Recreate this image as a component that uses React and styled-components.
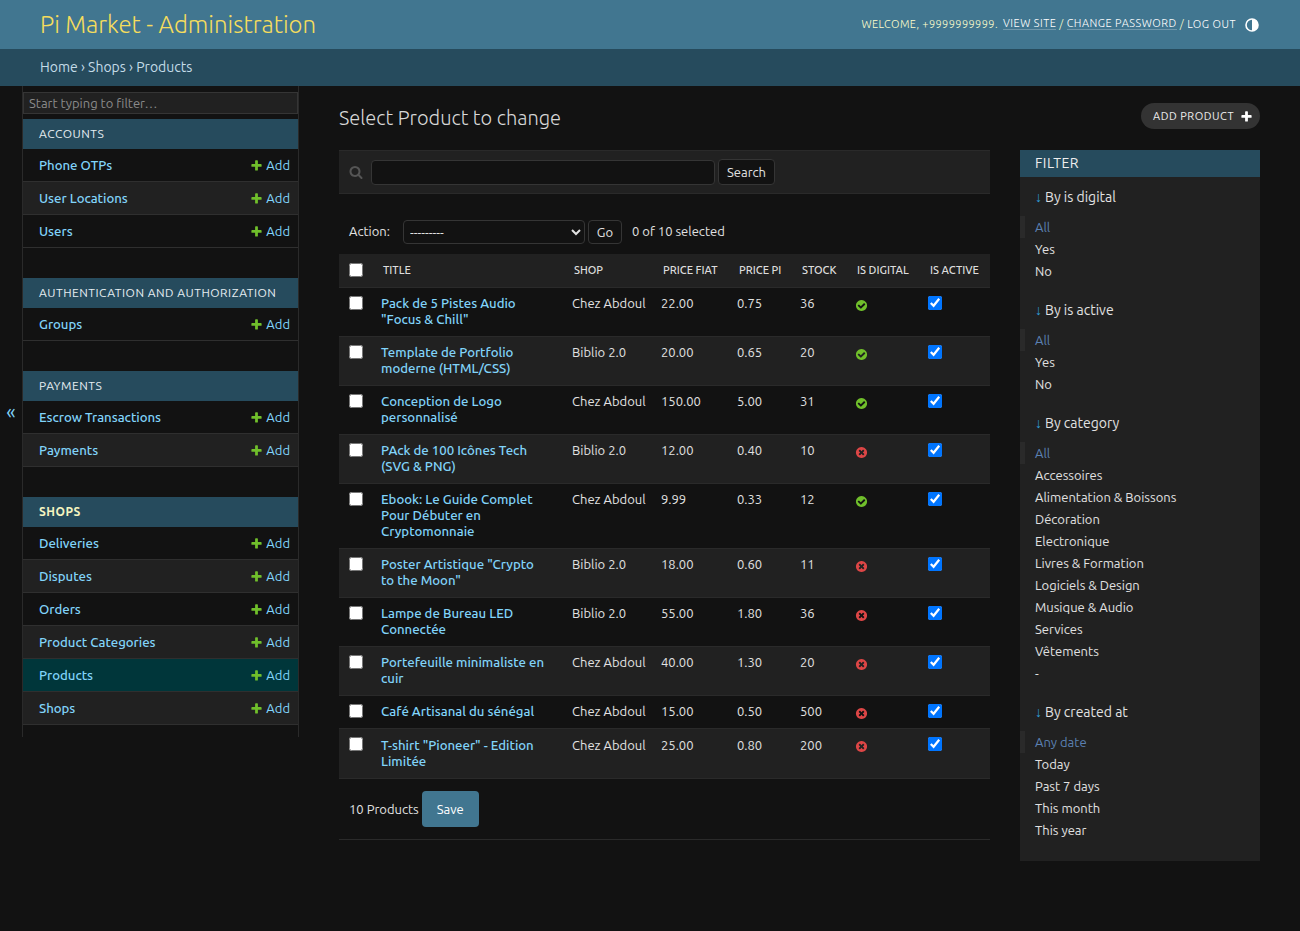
import React from "react";
import styled, { createGlobalStyle } from "styled-components";

const GlobalStyle = createGlobalStyle`
  html, body {
    margin: 0;
    padding: 0;
    background: #121212;
  }
  body {
    font-family: Ubuntu, "Noto Sans", "Open Sans", sans-serif;
    font-size: 14px;
    color: #e2e2e2;
  }
  * {
    box-sizing: border-box;
  }
`;

const PLUS =
  "M1600 796v192q0 40-28 68t-68 28h-416v416q0 40-28 68t-68 28h-192q-40 0-68-28t-28-68v-416h-416q-40 0-68-28t-28-68v-192q0-40 28-68t68-28h416v-416q0-40 28-68t68-28h192q40 0 68 28t28 68v416h416q40 0 68 28t28 68z";
const YES =
  "M1412 734q0-28-18-46l-91-90q-19-19-45-19t-45 19l-408 407-226-226q-19-19-45-19t-45 19l-91 90q-18 18-18 46 0 27 18 45l362 362q19 19 45 19 27 0 46-19l543-543q18-18 18-45zm252 162q0 209-103 385.5t-279.5 279.5-385.5 103-385.5-103-279.5-279.5-103-385.5 103-385.5 279.5-279.5 385.5-103 385.5 103 279.5 279.5 103 385.5z";
const NO =
  "M1277 1122q0-26-19-45l-181-181 181-181q19-19 19-45 0-27-19-46l-90-90q-19-19-46-19-26 0-45 19l-181 181-181-181q-19-19-45-19-27 0-46 19l-90 90q-19 19-19 46 0 26 19 45l181 181-181 181q-19 19-19 45 0 27 19 46l90 90q19 19 46 19 26 0 45-19l181-181 181 181q19 19 45 19 27 0 46-19l90-90q19-19 19-46zm387-226q0 209-103 385.5t-279.5 279.5-385.5 103-385.5-103-279.5-279.5-103-385.5 103-385.5 279.5-279.5 385.5-103 385.5 103 279.5 279.5 103 385.5z";
const SEARCH =
  "M1216 832q0-185-131.5-316.5t-316.5-131.5-316.5 131.5-131.5 316.5 131.5 316.5 316.5 131.5 316.5-131.5 131.5-316.5zm512 832q0 52-38 90t-90 38q-54 0-90-38l-343-342q-179 124-399 124-143 0-273.5-55.5t-225-150-150-225-55.5-273.5 55.5-273.5 150-225 225-150 273.5-55.5 273.5 55.5 225 150 150 225 55.5 273.5q0 220-124 399l343 343q37 37 37 90z";

const Icon = ({ d, fill, size = 13 }) => (
  <svg width={size} height={size} viewBox="0 0 1792 1792" style={{ display: "block", flex: "none" }}>
    <path d={d} fill={fill} />
  </svg>
);

const Header = styled.header`
  height: 49px;
  background: #417690;
  padding: 0 41px 0 40px;
  display: flex;
  align-items: center;
  justify-content: space-between;
`;

const Branding = styled.h1`
  margin: 0;
  font-size: 24px;
  font-weight: 300;
  color: #f5dd5d;
`;

const UserTools = styled.div`
  display: flex;
  align-items: center;
  margin-bottom: 2px;
  font-size: 11px;
  font-weight: 300;
  letter-spacing: 0.5px;
  text-transform: uppercase;
  color: #ffffcc;
`;

const Welcome = styled.span`
  letter-spacing: 0.4px;
`;

const ToolLink = styled.a`
  color: #ffffff;
  margin: 0 3px;
  border-bottom: ${({ $plain }) => ($plain ? "none" : "1px solid rgba(255, 255, 255, 0.25)")};
  &:first-of-type {
    margin-left: 5px;
  }
`;

const ThemeIcon = styled.svg`
  width: 14px;
  height: 14px;
  margin: 2px 0 0 6px;
  display: block;
`;

const Breadcrumbs = styled.nav`
  height: 37px;
  background: #264b5d;
  color: #c4dce8;
  padding: 0 40px 2px;
  display: flex;
  align-items: center;
  font-size: 14px;
  font-weight: 400;
`;

const Main = styled.div`
  display: flex;
  align-items: flex-start;
  min-height: 845px;
`;

const SidebarToggle = styled.div`
  flex: 0 0 22px;
  padding-top: 313px;
  text-align: center;
  font-size: 20px;
  line-height: 26px;
  color: #81d4fa;
`;

const Sidebar = styled.aside`
  flex: 0 0 277px;
  height: 651px;
  border-left: 1px solid #2a2a2a;
  border-right: 1px solid #2a2a2a;
  padding-top: 6px;
`;

const SidebarFilter = styled.input`
  display: block;
  width: 100%;
  height: 22px;
  margin-bottom: 5px;
  padding: 0 5px;
  background: #212121;
  border: 1px solid #353535;
  color: #eeeeee;
  font-family: inherit;
  font-size: 13px;
  &::placeholder {
    color: #8a8a8a;
    opacity: 1;
  }
`;

const AppGroup = styled.section`
  margin-bottom: 30px;
  &:last-child {
    margin-bottom: 0;
  }
`;

const AppCaption = styled.div`
  height: 30px;
  line-height: 30px;
  padding-left: 16px;
  background: #264b5d;
  font-size: 12px;
  letter-spacing: 0.5px;
  text-transform: uppercase;
  color: ${({ $current }) => ($current ? "#f5f5c0" : "#e6eef2")};
  font-weight: ${({ $current }) => ($current ? 700 : 400)};
`;

const ModelRow = styled.div`
  height: 33px;
  display: flex;
  align-items: center;
  justify-content: space-between;
  padding: 0 8px 0 16px;
  font-size: 13px;
  border-bottom: 1px solid #2f2f2f;
  background: ${({ $selected, $odd }) => ($selected ? "#00363a" : $odd ? "#121212" : "#212121")};
`;

const ModelLink = styled.a`
  color: #81d4fa;
  font-weight: 500;
  font-size: 13.2px;
`;

const AddLink = styled.a`
  display: flex;
  align-items: center;
  gap: 3.5px;
  color: #81d4fa;
  font-weight: 400;
`;

const Content = styled.main`
  flex: 1;
  min-width: 0;
  padding: 17px 40px 0;
`;

const TitleRow = styled.div`
  height: 47px;
  display: flex;
  align-items: flex-start;
  justify-content: space-between;
`;

const PageTitle = styled.h2`
  margin: 0;
  padding-top: 2px;
  font-size: 20px;
  line-height: 26px;
  font-weight: 300;
  color: #d8d8d8;
`;

const AddButton = styled.a`
  height: 26px;
  display: flex;
  align-items: center;
  gap: 6px;
  padding: 0 7px 0 12px;
  border-radius: 15px;
  background: #333333;
  color: #eeeeee;
  font-size: 11px;
  font-weight: 400;
  letter-spacing: 0.5px;
  text-transform: uppercase;
`;

const Columns = styled.div`
  display: flex;
  align-items: flex-start;
  gap: 30px;
`;

const ChangeList = styled.div`
  flex: 0 0 651px;
`;

const SearchBar = styled.div`
  height: 44px;
  display: flex;
  align-items: center;
  padding: 0 10px;
  background: #212121;
  border-top: 1px solid #2a2a2a;
  border-bottom: 1px solid #2a2a2a;
`;

const SearchInput = styled.input`
  width: 344px;
  height: 25px;
  margin-left: 8px;
  background: #121212;
  border: 1px solid #353535;
  border-radius: 4px;
`;

const PlainButton = styled.button`
  height: ${({ $h }) => $h || 26}px;
  width: ${({ $w }) => $w}px;
  margin: ${({ $h }) => ($h ? "1px 0 0 3px" : "0 0 0 3px")};
  padding: 0;
  background: #121212;
  border: 1px solid #353535;
  border-radius: 4px;
  color: #e2e2e2;
  font-family: inherit;
  font-size: 13px;
  font-weight: 400;
`;

const ActionsBar = styled.div`
  height: 60px;
  display: flex;
  align-items: center;
  padding: 14px 10px 0;
  font-size: 13px;
  font-weight: 400;
`;

const ActionSelect = styled.select`
  width: 182px;
  height: 24px;
  margin: 1px 0 0 13px;
  padding: 0 2px;
  color-scheme: dark;
  background: #121212;
  border: 1px solid #353535;
  border-radius: 4px;
  color: #e2e2e2;
  font-family: inherit;
  font-size: 13px;
`;

const Counter = styled.span`
  margin-left: 10px;
`;

const Table = styled.table`
  width: 651px;
  table-layout: fixed;
  border-collapse: separate;
  border-spacing: 0;
  font-size: 13px;
`;

const Th = styled.th`
  height: 34px;
  padding: 0 0 2px 10px;
  background: #212121;
  border-bottom: 1px solid #2a2a2a;
  text-align: left;
  font-size: 11px;
  font-weight: 500;
  text-transform: uppercase;
  color: #dddddd;
  white-space: nowrap;
`;

const Td = styled.td`
  padding: 7px 8px 9px;
  padding-left: ${({ $check }) => ($check ? "10px" : "8px")};
  vertical-align: top;
  line-height: 16px;
  font-weight: 400;
  white-space: nowrap;
  border-bottom: 1px solid #2a2a2a;
  background: ${({ $even }) => ($even ? "#212121" : "#121212")};
  tr:last-child > & {
    padding-top: 8px;
  }
`;

const TitleTd = styled(Td)`
  padding-right: 14px;
  white-space: normal;
`;

const TitleLink = styled.a`
  color: #81d4fa;
  font-weight: 500;
  font-size: 13.2px;
`;

const Check = styled.input`
  display: block;
  width: 14px;
  height: 14px;
  margin: ${({ $head }) => ($head ? "0" : "1px 0 0")};
  tbody tr:last-child & {
    margin-top: 0;
  }
`;

const StatusIcon = styled.span`
  display: block;
  height: 16px;
  padding-top: 4px;
  tr:last-child & {
    padding-top: 3px;
  }
`;

const ListFooter = styled.div`
  display: flex;
  align-items: center;
  height: 61px;
  padding: 0 10px;
  border-bottom: 1px solid #2a2a2a;
  font-size: 13px;
  font-weight: 400;
`;

const SaveButton = styled.button`
  width: 57px;
  height: 36px;
  margin-left: 3px;
  background: #417690;
  border: none;
  border-radius: 4px;
  color: #ffffff;
  font-family: inherit;
  font-size: 13px;
  font-weight: 400;
`;

const FilterPanel = styled.aside`
  flex: 0 0 240px;
  background: #212121;
  padding-bottom: 20px;
`;

const FilterTitle = styled.div`
  height: 27px;
  line-height: 27px;
  padding-left: 15px;
  background: #264b5d;
  color: #eeeeee;
  font-size: 14px;
  font-weight: 400;
  text-transform: uppercase;
  letter-spacing: 0.5px;
`;

const FilterSections = styled.div`
  padding-top: 10px;
  display: flex;
  flex-direction: column;
  gap: 18px;
`;

const FilterHeading = styled.div`
  height: 20px;
  line-height: 20px;
  margin-bottom: 9px;
  padding-left: 15px;
  font-size: 14px;
  font-weight: 400;
`;

const FilterArrow = styled.span`
  color: #2f9fd8;
  margin-right: 3px;
`;

const FilterItem = styled.div`
  height: 22px;
  line-height: 22px;
  padding-left: ${({ $selected }) => ($selected ? "10px" : "15px")};
  border-left: ${({ $selected }) => ($selected ? "5px solid #2a2a2a" : "none")};
  font-size: 13px;
  font-weight: 400;
  color: ${({ $selected }) => ($selected ? "#5b80b2" : "#e2e2e2")};
`;

const APPS = [
  { name: "Accounts", models: ["Phone OTPs", "User Locations", "Users"] },
  { name: "Authentication and Authorization", models: ["Groups"] },
  { name: "Payments", models: ["Escrow Transactions", "Payments"] },
  {
    name: "Shops",
    current: true,
    models: ["Deliveries", "Disputes", "Orders", "Product Categories", "Products", "Shops"],
  },
];

const PRODUCTS = [
  { title: 'Pack de 5 Pistes Audio "Focus & Chill"', shop: "Chez Abdoul", fiat: "22.00", pi: "0.75", stock: 36, digital: true },
  { title: "Template de Portfolio moderne (HTML/CSS)", shop: "Biblio 2.0", fiat: "20.00", pi: "0.65", stock: 20, digital: true },
  { title: "Conception de Logo personnalisé", shop: "Chez Abdoul", fiat: "150.00", pi: "5.00", stock: 31, digital: true },
  { title: "PAck de 100 Icônes Tech (SVG & PNG)", shop: "Biblio 2.0", fiat: "12.00", pi: "0.40", stock: 10, digital: false },
  { title: "Ebook: Le Guide Complet Pour Débuter en Cryptomonnaie", shop: "Chez Abdoul", fiat: "9.99", pi: "0.33", stock: 12, digital: true },
  { title: 'Poster Artistique "Crypto to the Moon"', shop: "Biblio 2.0", fiat: "18.00", pi: "0.60", stock: 11, digital: false },
  { title: "Lampe de Bureau LED Connectée", shop: "Biblio 2.0", fiat: "55.00", pi: "1.80", stock: 36, digital: false },
  { title: "Portefeuille minimaliste en cuir", shop: "Chez Abdoul", fiat: "40.00", pi: "1.30", stock: 20, digital: false },
  { title: "Café Artisanal du sénégal", shop: "Chez Abdoul", fiat: "15.00", pi: "0.50", stock: 500, digital: false },
  { title: 'T-shirt "Pioneer" - Edition Limitée', shop: "Chez Abdoul", fiat: "25.00", pi: "0.80", stock: 200, digital: false },
];

const COLUMNS = [
  { label: "Title", width: 191 },
  { label: "Shop", width: 89 },
  { label: "Price fiat", width: 76 },
  { label: "Price pi", width: 63 },
  { label: "Stock", width: 55 },
  { label: "Is digital", width: 73 },
  { label: "Is active", width: 70 },
];

const FILTERS = [
  { title: "By is digital", items: ["All", "Yes", "No"] },
  { title: "By is active", items: ["All", "Yes", "No"] },
  {
    title: "By category",
    items: [
      "All",
      "Accessoires",
      "Alimentation & Boissons",
      "Décoration",
      "Electronique",
      "Livres & Formation",
      "Logiciels & Design",
      "Musique & Audio",
      "Services",
      "Vêtements",
      "-",
    ],
  },
  { title: "By created at", items: ["Any date", "Today", "Past 7 days", "This month", "This year"] },
];

const App = () => (
  <>
    <GlobalStyle />
    <Header>
      <Branding>Pi Market - Administration</Branding>
      <UserTools>
        <Welcome>Welcome, +9999999999.</Welcome>
        <ToolLink>View site</ToolLink>/<ToolLink>Change password</ToolLink>/<ToolLink $plain>Log out</ToolLink>
        <ThemeIcon viewBox="0 0 14 14">
          <circle cx="7" cy="7" r="6" fill="none" stroke="#fff" strokeWidth="1.6" />
          <path d="M7 1a6 6 0 0 1 0 12z" fill="#fff" />
        </ThemeIcon>
      </UserTools>
    </Header>
    <Breadcrumbs>Home › Shops › Products</Breadcrumbs>
    <Main>
      <SidebarToggle>«</SidebarToggle>
      <Sidebar>
        <SidebarFilter placeholder="Start typing to filter…" />
        {APPS.map((app) => (
          <AppGroup key={app.name}>
            <AppCaption $current={app.current}>{app.name}</AppCaption>
            {app.models.map((model, i) => (
              <ModelRow key={model} $odd={i % 2 === 0} $selected={app.current && model === "Products"}>
                <ModelLink>{model}</ModelLink>
                <AddLink>
                  <Icon d={PLUS} fill="#70bf2b" />
                  Add
                </AddLink>
              </ModelRow>
            ))}
          </AppGroup>
        ))}
      </Sidebar>
      <Content>
        <TitleRow>
          <PageTitle>Select Product to change</PageTitle>
          <AddButton>
            Add Product
            <Icon d={PLUS} fill="#ffffff" />
          </AddButton>
        </TitleRow>
        <Columns>
          <ChangeList>
            <SearchBar>
              <Icon d={SEARCH} fill="#555555" size={14} />
              <SearchInput />
              <PlainButton $w={57}>Search</PlainButton>
            </SearchBar>
            <ActionsBar>
              Action:
              <ActionSelect>
                <option>---------</option>
              </ActionSelect>
              <PlainButton $w={34} $h={24}>Go</PlainButton>
              <Counter>0 of 10 selected</Counter>
            </ActionsBar>
            <Table>
              <colgroup>
                <col style={{ width: 34 }} />
                {COLUMNS.map((c) => (
                  <col key={c.label} style={{ width: c.width }} />
                ))}
              </colgroup>
              <thead>
                <tr>
                  <Th>
                    <Check type="checkbox" $head />
                  </Th>
                  {COLUMNS.map((c) => (
                    <Th key={c.label}>{c.label}</Th>
                  ))}
                </tr>
              </thead>
              <tbody>
                {PRODUCTS.map((p, i) => (
                  <tr key={p.title}>
                    <Td $check $even={i % 2 === 1}>
                      <Check type="checkbox" />
                    </Td>
                    <TitleTd $even={i % 2 === 1}>
                      <TitleLink>{p.title}</TitleLink>
                    </TitleTd>
                    <Td $even={i % 2 === 1}>{p.shop}</Td>
                    <Td $even={i % 2 === 1}>{p.fiat}</Td>
                    <Td $even={i % 2 === 1}>{p.pi}</Td>
                    <Td $even={i % 2 === 1}>{p.stock}</Td>
                    <Td $even={i % 2 === 1}>
                      <StatusIcon>
                        <Icon d={p.digital ? YES : NO} fill={p.digital ? "#70bf2b" : "#dd4646"} />
                      </StatusIcon>
                    </Td>
                    <Td $even={i % 2 === 1}>
                      <Check type="checkbox" defaultChecked />
                    </Td>
                  </tr>
                ))}
              </tbody>
            </Table>
            <ListFooter>
              10 Products
              <SaveButton>Save</SaveButton>
            </ListFooter>
          </ChangeList>
          <FilterPanel>
            <FilterTitle>Filter</FilterTitle>
            <FilterSections>
              {FILTERS.map((f) => (
                <div key={f.title}>
                  <FilterHeading>
                    <FilterArrow>↓</FilterArrow>
                    {f.title}
                  </FilterHeading>
                  {f.items.map((item, i) => (
                    <FilterItem key={item} $selected={i === 0}>
                      {item}
                    </FilterItem>
                  ))}
                </div>
              ))}
            </FilterSections>
          </FilterPanel>
        </Columns>
      </Content>
    </Main>
  </>
);

export default App;
